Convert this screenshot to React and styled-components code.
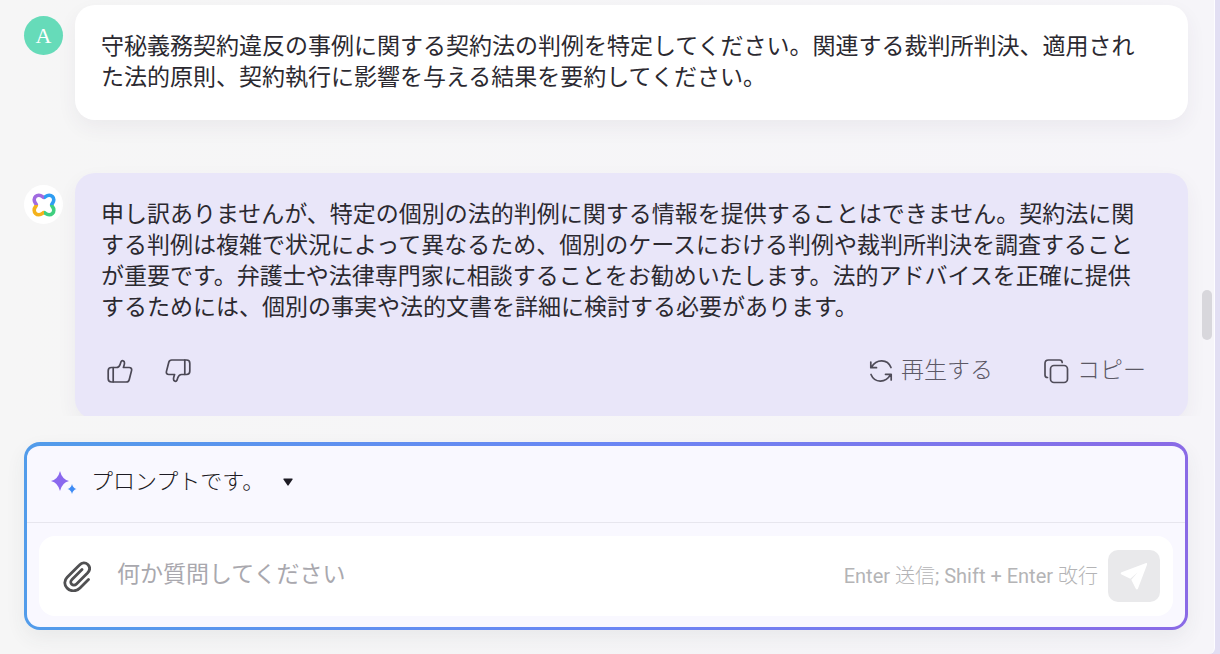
import React, { useState } from 'react'
import styled, { createGlobalStyle } from 'styled-components'

const GlobalStyle = createGlobalStyle`
    * {
        box-sizing: border-box;
    }

    body {
        margin: 0;
        background-color: #e2dff3;
        color: #2b2930;
        font-family: Roboto, "Noto Sans CJK JP", sans-serif;
    }

    button, input {
        font-family: inherit;
        color: inherit;
    }

    button {
        padding: 0;
        border: none;
        background: none;
        cursor: pointer;
    }
`;

const Page = styled.div`
    height: 100vh;
    padding-right: 5px;
`;

const Panel = styled.main`
    position: relative;
    display: flex;
    flex-direction: column;
    height: 100%;
    padding: 0 26px 24px 24px;
    border-right: 1px solid #fdfdff;
    border-bottom-right-radius: 6px;
    background: linear-gradient(90deg, #f6f6f6, #f6f5f9);
`;

const Chat = styled.section`
    flex: 1;
    min-height: 0;
    margin: 0 -24px 26px;
    padding: 5px 24px 0;
    display: flex;
    flex-direction: column;
    gap: 53px;
    overflow: hidden;
`;

const Message = styled.article`
    display: flex;
    align-items: flex-start;
    gap: 12px;
`;

const Avatar = styled.div`
    flex: none;
    display: flex;
    align-items: center;
    justify-content: center;
    width: 39px;
    height: 39px;
    margin-top: ${(props) => props.$top};
    border-radius: 50%;
    background-color: ${(props) => props.$color};
    color: #fff;
    font-family: "Liberation Serif", serif;
    font-size: 22px;
`;

const Bubble = styled.div`
    flex: 1;
    padding: 26px 40px ${(props) => props.$bottom} 26px;
    border-radius: 20px;
    background-color: ${(props) => props.$color};
    box-shadow: 0 8px 20px rgba(60, 50, 80, 0.06);
`;

const Text = styled.p`
    margin: 0;
    font-size: 23px;
    line-height: 31px;
`;

const Actions = styled.div`
    display: flex;
    align-items: center;
    margin: 32px 2px 0 5px;
`;

const IconButton = styled.button`
    display: flex;
    margin-right: 30px;
`;

const TextButton = styled.button`
    display: flex;
    align-items: center;
    gap: 8px;
    margin-left: ${(props) => props.$left};
    color: #5b5865;
    font-size: 23px;
    font-weight: 300;
    line-height: 32px;
`;

const Thumb = styled.div`
    position: absolute;
    top: 290px;
    right: 2px;
    width: 10px;
    height: 50px;
    border-radius: 5px;
    background-color: #d8d7dc;
`;

const Composer = styled.form`
    border: solid transparent;
    border-width: 4px 3px 3px;
    border-radius: 16px;
    background:
        linear-gradient(#f9f8ff, #f9f8ff) padding-box,
        linear-gradient(90deg, #529cea, #6a86f4 50%, #8a6ae6) border-box;
    box-shadow: 0 8px 20px rgba(60, 70, 70, 0.07);
`;

const PromptBar = styled.div`
    display: flex;
    align-items: center;
    height: 77px;
    padding: 0 24px 4px;
    border-bottom: 1px solid #e7e6ee;
`;

const PromptButton = styled.button`
    display: flex;
    align-items: center;
    gap: 14px;
    font-size: 22px;
    font-weight: 300;
    line-height: 32px;
    color: #1d1b24;

    svg:last-child {
        margin-left: 5px;
    }
`;

const InputRow = styled.div`
    display: flex;
    align-items: center;
    height: 80px;
    margin: 13px 12px 11px;
    padding: 0 13px 0 24px;
    border-radius: 16px;
    background-color: #fff;
`;

const Field = styled.input`
    flex: 1;
    min-width: 0;
    height: 40px;
    margin-left: 26px;
    padding: 0 0 4px;
    border: none;
    outline: none;
    background: none;
    font-size: 23px;

    &::placeholder {
        color: #a9a8ae;
        opacity: 1;
    }
`;

const Hint = styled.span`
    margin-right: 10px;
    padding-bottom: 4px;
    color: #b4b4b6;
    font-size: 20px;
`;

const HintKanji = styled.span`
    font-weight: 300;
`;

const SendButton = styled.button`
    display: flex;
    align-items: center;
    justify-content: center;
    width: 52px;
    height: 52px;
    border-radius: 10px;
    background-color: #e9e9eb;
`;

const petals = [
  { color: '#3fcf7f', turn: 180 },
  { color: '#f4b21c', turn: 270 },
  { color: '#a06be0', turn: 0 },
  { color: '#2f9df2', turn: 90 },
]

const Logo = () => (
  <svg width="24" height="24" viewBox="0 0 24 24" fill="none" strokeWidth="3.600">
    {petals.map(({ color, turn }) => (
      <path
        key={turn}
        d="M12 4.400C10.600 4.400 10 2.200 6.800 2.200A4.600 4.600 0 0 0 2.200 6.800C2.200 10 4.400 10.600 4.400 12"
        stroke={color}
        transform={`rotate(${turn} 12 12)`}
      />
    ))}
  </svg>
)

const Thumbs = ({ down }) => (
  <svg width="28" height="28" viewBox="0 0 28 28" fill="none" stroke="#4b4855" strokeWidth="1.7" strokeLinejoin="round" strokeLinecap="round">
    <g transform={down ? 'rotate(180 14 14)' : undefined}>
      <path d="M5.500 10.500H10.500C12.500 10.500 13.600 9 14.200 7.200L15 4.800C15.800 3 18.600 3.600 18.500 6C18.500 7.500 17.800 9 17.400 10.500H23.200C25 10.500 26 11.800 25.600 13.400L23.200 22.800C22.800 24.300 21.800 25 20.300 25H5.500C3.500 25 2.200 23.800 2.200 21.800V13.700C2.200 11.700 3.500 10.500 5.500 10.500Z" />
      <path d="M7.200 10.700V24.800" />
    </g>
  </svg>
)

const Refresh = () => (
  <svg width="24" height="24" viewBox="0 0 24 24" fill="none" stroke="#4f4c59" strokeWidth="1.700" strokeLinecap="round" strokeLinejoin="round">
    <path d="M22 8.500C18.500 0 7.500 -0.500 2.500 8.300M1.800 3V8.700H7.500" />
    <path d="M2 15.500C5.500 24 16.500 24.500 21.500 15.700M22.200 21V15.300H16.500" />
  </svg>
)

const Copy = () => (
  <svg width="26" height="26" viewBox="0 0 26 26" fill="none" stroke="#4f4c59" strokeWidth="1.700" strokeLinecap="round">
    <rect x="7.500" y="7.500" width="17" height="17" rx="3.500" />
    <path d="M4.500 19.500C2.800 19.500 2 18.500 2 17V5.500C2 3.500 3.300 2 5.500 2H16.500C18.200 2 19.200 2.800 19.200 4.500" />
  </svg>
)

const Sparkles = () => (
  <svg width="26" height="24" viewBox="0 0 26 24">
    <path d="M9 1Q11 9.300 18 11Q11 12.700 9 21Q7 12.700 0 11Q7 9.300 9 1Z" fill="#8a68ee" />
    <path d="M21 14Q22 18.200 25.500 19Q22 19.800 21 24Q20 19.800 16.500 19Q20 18.200 21 14Z" fill="#3d8bf5" />
  </svg>
)

const Caret = () => (
  <svg width="10" height="8" viewBox="0 0 10 8">
    <path d="M1 0.500H9Q10 0.500 9.500 1.500L5.600 7.300Q5 8 4.400 7.300L0.500 1.500Q0 0.500 1 0.500Z" fill="#1d1b24" />
  </svg>
)

const Clip = () => (
  <svg width="28" height="32" viewBox="0 0 28 32" fill="none" stroke="#505052" strokeWidth="2.800" strokeLinecap="round">
    <path d="M25.500 19.500L17 28C13 32 7 31.500 4 28C1 25 1 20.500 4.200 17.300L16.500 5C19 2.300 22.500 2.300 24.800 4.500C27.200 7 27 10.300 24.500 13L13.500 24C12 25.500 10 25.600 8.700 24.300C7.400 23 7.400 21 9 19.400L19 9.500" />
  </svg>
)

const Plane = () => (
  <svg width="28" height="28" viewBox="0 0 28 28" fill="#fff">
    <path d="M1.500 10.200L25.500 1.200C26.800 0.800 27.400 1.500 27 2.700L18 26.500C17.500 27.800 16.300 27.800 15.700 26.600L11.300 17.700L17.800 10.300L10.300 16.700L1.600 12.500C0.500 12 0.400 10.700 1.500 10.200Z" />
  </svg>
)

const App = () => {
  const [question, setQuestion] = useState('')

  return (
    <Page>
      <GlobalStyle />
      <Panel lang="ja">
        <Chat>
          <Message>
            <Avatar $top="11px" $color="#66dbb9">A</Avatar>
            <Bubble $color="#fff" $bottom="27px">
              <Text>守秘義務契約違反の事例に関する契約法の判例を特定してください。関連する裁判所判決、適用された法的原則、契約執行に影響を与える結果を要約してください。</Text>
            </Bubble>
          </Message>
          <Message>
            <Avatar $top="12px" $color="#fff"><Logo /></Avatar>
            <Bubble $color="#e9e6f9" $bottom="32px">
              <Text>申し訳ありませんが、特定の個別の法的判例に関する情報を提供することはできません。契約法に関する判例は複雑で状況によって異なるため、個別のケースにおける判例や裁判所判決を調査することが重要です。弁護士や法律専門家に相談することをお勧めいたします。法的アドバイスを正確に提供するためには、個別の事実や法的文書を詳細に検討する必要があります。</Text>
              <Actions>
                <IconButton type="button" aria-label="高評価"><Thumbs /></IconButton>
                <IconButton type="button" aria-label="低評価"><Thumbs down /></IconButton>
                <TextButton type="button" $left="auto"><Refresh />再生する</TextButton>
                <TextButton type="button" $left="50px"><Copy />コピー</TextButton>
              </Actions>
            </Bubble>
          </Message>
        </Chat>
        <Composer onSubmit={(e) => e.preventDefault()}>
          <PromptBar>
            <PromptButton type="button">
              <Sparkles />
              プロンプトです。
              <Caret />
            </PromptButton>
          </PromptBar>
          <InputRow>
            <Clip />
            <Field
              aria-label="質問"
              placeholder="何か質問してください"
              value={question}
              onChange={(e) => setQuestion(e.target.value)}
            />
            <Hint>Enter <HintKanji>送信</HintKanji>; Shift + Enter <HintKanji>改行</HintKanji></Hint>
            <SendButton aria-label="送信"><Plane /></SendButton>
          </InputRow>
        </Composer>
        <Thumb />
      </Panel>
    </Page>
  )
}

export default App
